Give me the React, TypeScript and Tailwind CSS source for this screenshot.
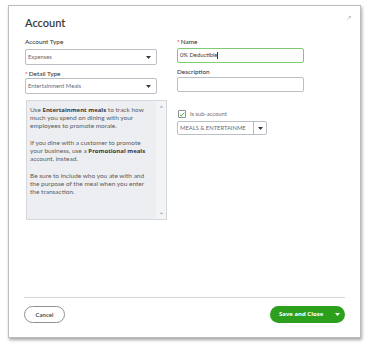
import React from 'react'

function Caret({ className = '' }: { className?: string }) {
  return (
    <svg width="5" height="3" viewBox="0 0 5 3" className={className}>
      <path d="M0 0h5L2.5 3z" fill="currentColor" />
    </svg>
  )
}

function Label({ children, required }: { children: React.ReactNode; required?: boolean }) {
  return (
    <div className="h-[8px] text-[6.4px] leading-[8px] font-medium text-[#393a3d]">
      {required && <span className="text-[#d52b1e] mr-[1px]">*</span>}
      {children}
    </div>
  )
}

function Select({ value }: { value: string }) {
  return (
    <div className="h-[16px] flex items-center justify-between border border-[#babec5] rounded-[2px] bg-white pl-[2px] pr-[5px]">
      <span className="text-[5.8px] text-[#6b6c72]">{value}</span>
      <Caret className="text-[#393a3d]" />
    </div>
  )
}

const strong = "font-['Open_Sans'] font-bold text-[6px] text-[#393a3d]"

export default function App() {
  return (
    <div className="w-[369px] h-[347px] bg-white pl-[8px] pt-[5px]" style={{ fontFamily: 'Lato, "Open Sans", sans-serif' }}>
      <div className="relative w-[353px] h-[333px] bg-white border border-[#bdbdbd] shadow-[1px_2px_3px_rgba(0,0,0,0.35)] flex flex-col">
        {/* expand icon */}
        <svg className="absolute top-[10px] right-[9px] text-[#b0b3b8]" width="4" height="4" viewBox="0 0 5 5">
          <path d="M0.5 4.5L4.5 0.5M2 0.5h2.5V3" stroke="currentColor" strokeWidth="0.9" fill="none" />
        </svg>

        <div className="flex-1 pl-[16px] pt-[10px]">
          <div className="text-[11px] leading-[14px] font-semibold text-[#393a3d]">Account</div>

          <div className="flex gap-[20px] mt-[8px]">
            {/* left column */}
            <div className="w-[132px] flex flex-col">
              <Label>Account Type</Label>
              <div className="mt-[3px]">
                <Select value="Expenses" />
              </div>
              <div className="mt-[5px]">
                <Label required>Detail Type</Label>
              </div>
              <Select value="Entertainment Meals" />

              <div className="mt-[6px] ml-[1px] w-[141px] h-[120px] flex border border-[#d4d7dc] bg-[#eceef1]">
                <div className="flex-1 pl-[3px] pt-[5px] text-[6.5px] leading-[8px] text-[#5b5c62] whitespace-nowrap">
                  <p>
                    Use <span className={strong}>Entertainment meals</span> to track how
                    <br />
                    much you spend on dining with your
                    <br />
                    employees to promote morale.
                  </p>
                  <p className="mt-[9px]">
                    If you dine with a customer to promote
                    <br />
                    your business, use a <span className={strong}>Promotional meals</span>
                    <br />
                    account, instead.
                  </p>
                  <p className="mt-[9px]">
                    Be sure to include who you ate with and
                    <br />
                    the purpose of the meal when you enter
                    <br />
                    the transaction.
                  </p>
                </div>
                <div className="w-[10px] bg-[#f3f4f6] flex flex-col items-center justify-between py-[4px] text-[#a8abb1]">
                  <Caret className="rotate-180 scale-75" />
                  <Caret className="scale-75" />
                </div>
              </div>
            </div>

            {/* right column */}
            <div className="w-[127px] flex flex-col">
              <Label required>Name</Label>
              <div className="mt-[2px] h-[15px] flex items-center border border-[#7fcb72] rounded-[2px] pl-[2px]">
                <span className="text-[5.8px] text-[#393a3d]">0% Deductible</span>
                <span className="w-[0.8px] h-[7px] bg-[#393a3d]" />
              </div>
              <div className="mt-[5px]">
                <Label>Description</Label>
              </div>
              <div className="mt-[1px] h-[15px] border border-[#babec5] rounded-[2px]" />

              <div className="mt-[18px] h-[8px] flex items-center gap-[4px] pl-[1px]">
                <div className="w-[8px] h-[8px] border border-[#8d9096] rounded-[1px] flex items-center justify-center">
                  <svg width="6" height="5" viewBox="0 0 6 5">
                    <path d="M0.8 2.6L2.3 4L5.2 0.8" stroke="#2ca01c" strokeWidth="0.9" fill="none" />
                  </svg>
                </div>
                <span className="text-[5.8px] text-[#6b6c72]">Is sub-account</span>
              </div>
              <div className="mt-[3px] w-[90px] h-[14px] flex border border-[#babec5] rounded-[2px]">
                <div className="flex-1 flex items-center pl-[2px] overflow-hidden">
                  <span className="text-[5.8px] text-[#6b6c72] whitespace-nowrap">MEALS &amp; ENTERTAINME</span>
                </div>
                <div className="w-[13px] border-l border-[#babec5] flex items-center justify-center text-[#393a3d]">
                  <Caret />
                </div>
              </div>
            </div>
          </div>
        </div>

        {/* footer */}
        <div className="mx-[15px] border-t border-[#d4d7dc] pt-[8px] pb-[14px] flex justify-between">
          <button className="w-[41px] h-[17px] rounded-full border border-[#8d9096] text-[6px] font-semibold text-[#393a3d]">
            Cancel
          </button>
          <button className="w-[75px] h-[17px] rounded-full bg-[#2ca01c] text-white flex items-center pl-[9px] pr-[5px] justify-between">
            <span className="font-['Open_Sans'] font-bold text-[6px]">Save and Close</span>
            <Caret />
          </button>
        </div>
      </div>
    </div>
  )
}
